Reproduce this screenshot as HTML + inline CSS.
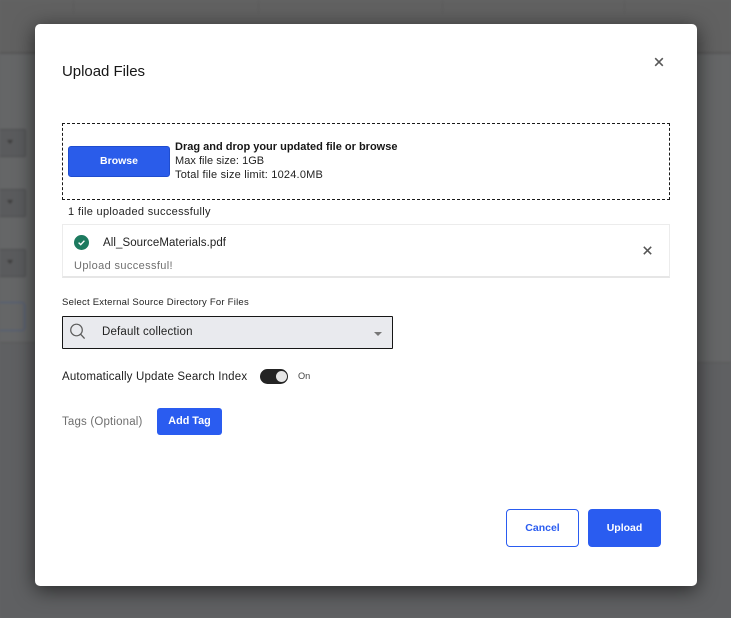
<!DOCTYPE html>
<html>
<head>
<meta charset="utf-8">
<style>
html,body{margin:0;padding:0;width:731px;height:618px;overflow:hidden;background:#646566;font-family:"Liberation Sans",sans-serif;color:#161616}
.a{position:absolute;white-space:nowrap}
#bg{position:absolute;left:0;top:0;width:731px;height:618px;overflow:hidden;background:#656667;filter:blur(1px)}
#modal{position:absolute;left:35px;top:24px;width:662px;height:562px;background:#fff;border-radius:5px;box-shadow:0 4px 20px rgba(0,0,0,.6)}
.t{position:absolute;white-space:nowrap;line-height:14px}
</style>
</head>
<body>
<div id="bg">
  <div class="a" style="left:0;top:0;width:731px;height:53px;background:#616161"></div>
  <div class="a" style="left:0;top:52px;width:731px;height:2px;background:#565656"></div>
  <div class="a" style="left:73px;top:0;width:1px;height:14px;background:#5a5a5a"></div>
  <div class="a" style="left:258px;top:0;width:1px;height:14px;background:#5a5a5a"></div>
  <div class="a" style="left:442px;top:0;width:1px;height:14px;background:#5a5a5a"></div>
  <div class="a" style="left:624px;top:0;width:1px;height:14px;background:#5a5a5a"></div>
  <div class="a" style="left:-6px;top:129px;width:30px;height:26px;border:1px solid #4e4f50;background:#5a5b5d;border-radius:2px"></div>
  <div class="a" style="left:-6px;top:189px;width:30px;height:26px;border:1px solid #4e4f50;background:#5a5b5d;border-radius:2px"></div>
  <div class="a" style="left:-6px;top:249px;width:30px;height:26px;border:1px solid #4e4f50;background:#5a5b5d;border-radius:2px"></div>
  <div class="a" style="left:-6px;top:302px;width:29px;height:27px;border:1px solid #4d5a78;border-radius:3px"></div>
  <div class="a" style="left:7px;top:140px;border-left:3px solid transparent;border-right:3px solid transparent;border-top:4px solid #3c3c3c"></div>
  <div class="a" style="left:7px;top:200px;border-left:3px solid transparent;border-right:3px solid transparent;border-top:4px solid #3c3c3c"></div>
  <div class="a" style="left:7px;top:260px;border-left:3px solid transparent;border-right:3px solid transparent;border-top:4px solid #3c3c3c"></div>
  <div class="a" style="left:0;top:343px;width:36px;height:275px;background:#5f6062"></div>
  <div class="a" style="left:0;top:342px;width:36px;height:1px;background:#585858"></div>
  <div class="a" style="left:36px;top:363px;width:695px;height:255px;background:#5f6062"></div>
  <div class="a" style="left:697px;top:362px;width:34px;height:1px;background:#585858"></div>
</div>

<div id="modal">
  <div class="t" style="left:27px;top:40px;font-size:15px;line-height:15px;letter-spacing:-.03px">Upload Files</div>
  <svg class="a" style="left:619px;top:33px" width="10" height="10" viewBox="0 0 10 10"><path d="M1.2 1.2L8.8 8.8M8.8 1.2L1.2 8.8" stroke="#585858" stroke-width="1.6"/></svg>

  <div class="a" style="left:27px;top:99px;width:606px;height:75px;border:1px dashed #1a1a1a"></div>
  <div class="a" style="left:33px;top:122px;width:100px;height:29px;background:#2a5cea;border:1px solid #1f4dcf;border-radius:3px;color:#fff;font-size:10.5px;font-weight:700;text-align:center;line-height:29px">Browse</div>
  <div class="t" style="left:140px;top:116px;font-size:11px;font-weight:700">Drag and drop your updated file or browse</div>
  <div class="t" style="left:140px;top:130px;font-size:11px;color:#222;letter-spacing:.03px">Max file size: 1GB</div>
  <div class="t" style="left:140px;top:144px;font-size:11px;color:#222;letter-spacing:.2px">Total file size limit: 1024.0MB</div>
  <div class="t" style="left:33px;top:181px;font-size:11px;color:#222;letter-spacing:.32px">1 file uploaded successfully</div>

  <div class="a" style="left:27px;top:200px;width:606px;height:51px;border:1px solid #ececec;border-bottom:2px solid #e6e6e6"></div>
  <svg class="a" style="left:39px;top:211px" width="15" height="15" viewBox="0 0 15 15"><circle cx="7.5" cy="7.5" r="7.5" fill="#1d7a5f"/><path d="M4.6 7.6L6.7 9.6L10.4 5.7" stroke="#fff" stroke-width="1.4" fill="none"/></svg>
  <div class="t" style="left:68px;top:212px;font-size:11.5px;color:#222;letter-spacing:.07px">All_SourceMaterials.pdf</div>
  <svg class="a" style="left:608px;top:222px" width="9" height="9" viewBox="0 0 9 9"><path d="M.8 .8L8.2 8.2M8.2 .8L.8 8.2" stroke="#555" stroke-width="1.5"/></svg>
  <div class="t" style="left:39px;top:235px;font-size:11px;color:#6f6f6f;letter-spacing:.37px">Upload successful!</div>

  <div class="t" style="left:27px;top:272px;font-size:9.5px;color:#222;letter-spacing:.24px">Select External Source Directory For Files</div>
  <div class="a" style="left:27px;top:292px;width:329px;height:31px;background:#e9eaee;border:1px solid #161616;border-radius:1px"></div>
  <svg class="a" style="left:34px;top:299px" width="18" height="18" viewBox="0 0 18 18"><circle cx="7.5" cy="7" r="5.8" stroke="#5c5c5c" stroke-width="1.2" fill="none"/><path d="M11.6 11.2L15.6 15.6" stroke="#5c5c5c" stroke-width="1.3"/></svg>
  <div class="t" style="left:67px;top:301px;font-size:11.5px;color:#222;letter-spacing:.17px">Default collection</div>
  <div class="a" style="left:339px;top:308px;border-left:4px solid transparent;border-right:4px solid transparent;border-top:4px solid #777"></div>

  <div class="t" style="left:27px;top:346px;font-size:11.5px;color:#222;letter-spacing:.17px">Automatically Update Search Index</div>
  <div class="a" style="left:225px;top:345px;width:28px;height:15px;background:#242424;border-radius:8px"></div>
  <div class="a" style="left:241px;top:347px;width:11px;height:11px;background:#e6e6e6;border-radius:50%"></div>
  <div class="t" style="left:263px;top:345px;font-size:9.2px;color:#444">On</div>

  <div class="t" style="left:27px;top:391px;font-size:11.5px;color:#6f6f6f;letter-spacing:.17px">Tags (Optional)</div>
  <div class="a" style="left:122px;top:384px;width:65px;height:27px;background:#2a5cf0;border-radius:3px;color:#fff;font-size:10.8px;font-weight:700;text-align:center;line-height:27px">Add Tag</div>

  <div class="a" style="left:471px;top:485px;width:71px;height:36px;background:#fff;border:1px solid #2a5cf0;border-radius:4px;color:#2a5cf0;font-size:10.5px;font-weight:700;text-align:center;line-height:36px">Cancel</div>
  <div class="a" style="left:553px;top:485px;width:73px;height:38px;background:#2a5cf0;border-radius:4px;color:#fff;font-size:10.5px;font-weight:700;text-align:center;line-height:38px">Upload</div>
</div>
</body>
</html>
